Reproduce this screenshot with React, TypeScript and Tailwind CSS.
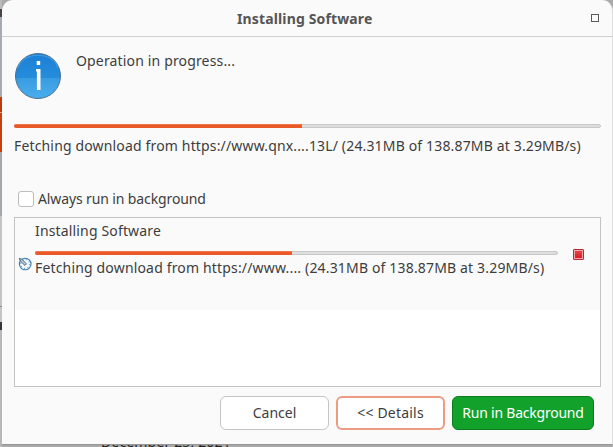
import React from 'react';

function Progress({ value, className = '' }: { value: number; className?: string }) {
  return (
    <div className={`h-1 shrink-0 rounded-xs border border-[#c8c8c8] bg-[#dedede] ${className}`}>
      <div className="-mt-px -ml-px h-1 rounded-l-xs border-t border-[#f1744a] bg-[#ea5a28]" style={{ width: value }} />
    </div>
  );
}

function InfoIcon() {
  return (
    <svg width="48" height="48" viewBox="0 0 48 48" className="shrink-0">
      <defs>
        <linearGradient id="info" x1="0" y1="0" x2="0" y2="1">
          <stop offset="0" stopColor="#1b7fd6" />
          <stop offset=".54" stopColor="#268ddc" />
          <stop offset=".55" stopColor="#399ce1" />
          <stop offset="1" stopColor="#49aeed" />
        </linearGradient>
      </defs>
      <circle cx="24" cy="24" r="22.5" fill="url(#info)" stroke="#4c6f8c" />
      <path d="M4 16C9 -1 39 -1 44 16" fill="none" stroke="#58a9e6" strokeWidth=".7" />
      <path d="M22.7 9H26.2v4h-3.5zM22 17h4.5v21h-3.6V19.5H22z" fill="#fff" />
    </svg>
  );
}

function ClockIcon() {
  return (
    <svg width="14" height="14" viewBox="0 0 14 14" className="shrink-0">
      <circle cx="7.2" cy="7" r="5.8" fill="#f2f7fa" stroke="#3c79b4" strokeWidth="1.1" />
      <circle cx="7.2" cy="7" r="4.5" fill="none" stroke="#6f9fc7" strokeWidth="1.4" strokeDasharray="1 2.53" />
      <path d="M1.2 1.5 3.7 2l4.7 4.9-1.5 1.5L2.4 4z" fill="#b8d0dc" stroke="#284b64" strokeWidth=".8" />
    </svg>
  );
}

export default function App() {
  return (
    <div className="relative flex h-[447px] w-[613px] overflow-hidden bg-[#aaa] font-['Noto_Sans',sans-serif] text-[14px] leading-5 tracking-[0.155px] whitespace-nowrap text-[#3d3d3d]">
      <div className="flex w-0.5 shrink-0 flex-col bg-[#b6b9bb]">
        <div className="h-[9px] bg-[#b7bbbe]" />
        <div className="h-2 bg-[#4a4448]" />
        <div className="h-20 bg-[#a5abb0]" />
        <div className="h-[15px] bg-[#bd3c0e]" />
        <div className="h-px bg-[#e4a58d]" />
        <div className="h-[39px] bg-[#c7410f]" />
        <div className="h-[64px] bg-[#a3a9ad]" />
        <div className="h-[90px] bg-[#c4c4c4]" />
        <div className="h-px bg-[#8b8b8b]" />
        <div className="h-[15px] bg-[#c4c4c4]" />
        <div className="h-2 bg-[#35343b]" />
      </div>

      <main className="flex h-[445px] w-[611px] shrink-0 flex-col rounded-t-[11px] border-r border-b border-r-[#dedede] border-b-[#969696] bg-[#fafafa]">
        <header className="flex h-[37px] shrink-0 items-center border-b border-[#cfcfcf] pt-px pl-[235px]">
          <h1 className="w-[354px] text-[14px] font-bold tracking-[0.14px] text-[#555]">Installing Software</h1>
          <span className="-mt-px size-2 border border-[#5a5a5a]" />
        </header>

        <section className="flex flex-col px-3 pt-[15px]">
          <div className="flex h-[72px] gap-[14px]">
            <InfoIcon />
            <p className="-mt-px">Operation in progress...</p>
          </div>
          <Progress value={288} className="w-[587px]" />
          <p className="mt-2">Fetching download from https://www.qnx....13L/ (24.31MB of 138.87MB at 3.29MB/s)</p>
          <label className="mt-[33px] flex items-center gap-1 pl-1">
            <span className="size-4 rounded-[3px] border border-[#bdbdbd] bg-white" />
            <span className="tracking-[-0.12px]">Always run in background</span>
          </label>

          <div className="mt-2 h-[170px] w-[587px] border border-[#c3c3c3] bg-white">
            <div className="flex h-[92px] bg-[#fafafa]">
              <div className="w-5 pt-[39px] pl-[3px]"><ClockIcon /></div>
              <div className="w-[523px] pt-[3px]">
                <p>Installing Software</p>
                <Progress value={257} className="mt-[10px]" />
                <p className="mt-[3px] tracking-[0.165px]">Fetching download from https://www.... (24.31MB of 138.87MB at 3.29MB/s)</p>
              </div>
              <button className="mt-[31px] ml-[15px] size-[11px] rounded-[1px] border border-[#b52c36] bg-[#f2a6aa] p-px">
                <span className="block size-[7px] bg-linear-to-b from-[#e5434b] to-[#da1820]" />
              </button>
            </div>
          </div>
        </section>

        <footer className="flex gap-[7px] pt-[9px] pl-[218px]">
          <button className="h-[34px] w-[109px] rounded-md border border-[#c5c5c5] bg-white tracking-normal">Cancel</button>
          <button className="h-[34px] w-[109px] rounded-md border-2 border-[#ec9c82] bg-white tracking-[0.2px]">&lt;&lt; Details</button>
          <button className="h-[34px] w-[142px] rounded-md border border-[#0b7c1b] bg-[#12a12a] tracking-[-0.23px] text-white">Run in Background</button>
        </footer>
      </main>

      <p className="absolute top-[432px] left-[101px] text-[#222] [clip-path:inset(13px_0_0_0)]">December 25, 2021</p>
    </div>
  );
}
